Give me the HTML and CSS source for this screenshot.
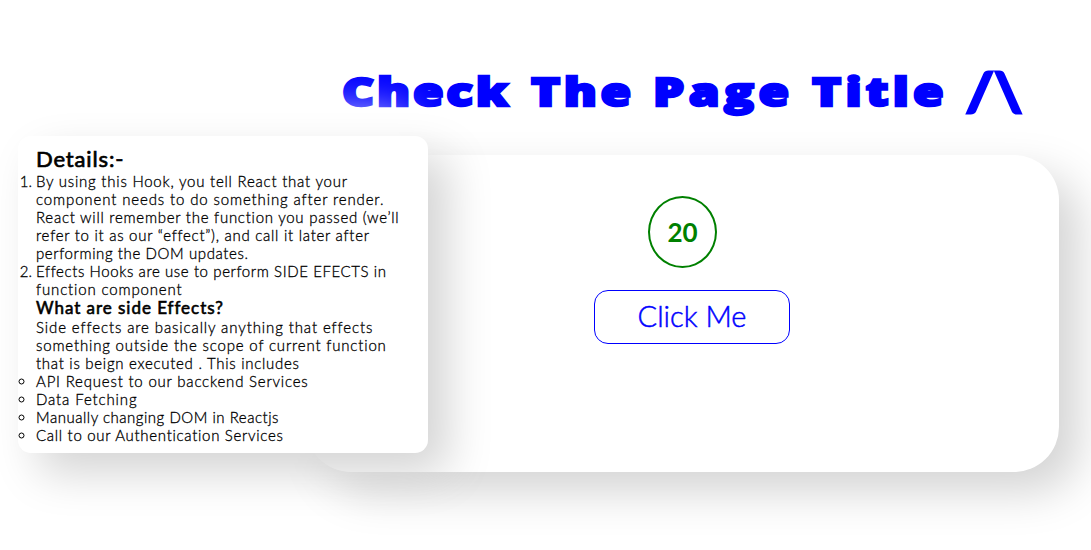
FILE: index.html
```
<!DOCTYPE html>
<html lang="en">
<head>
<meta charset="utf-8">
<title>Check The Page Title</title>
<link rel="stylesheet" href="styles.css">
</head>
<body>
<main class="page">
  <h1 class="heading"><span class="word check">Check</span><span class="word the">The</span><span class="word pg">Page</span><span class="word title">Title</span><span class="word arrow">/\</span></h1>
  <section class="card">
    <div class="count">20</div>
    <button class="button">Click Me</button>
  </section>
  <aside class="details">
    <h2 class="details-title">Details:-</h2>
    <ol class="list">
      <li><span class="line a1">By using this Hook, you tell React that your</span>
        <span class="line a2">component needs to do something after render.</span>
        <span class="line a3">React will remember the function you passed (we’ll</span>
        <span class="line a4">refer to it as our “effect”), and call it later after</span>
        <span class="line a5">performing the DOM updates.</span></li>
      <li><span class="line a6">Effects Hooks are use to perform SIDE EFECTS in</span>
        <span class="line a7">function component</span></li>
    </ol>
    <h3 class="subtitle">What are side Effects?</h3>
    <p class="text"><span class="line a8">Side effects are basically anything that effects</span>
      <span class="line a9">something outside the scope of current function</span>
      <span class="line a10">that is beign executed . This includes</span></p>
    <ul class="list circles">
      <li><span class="line a11">API Request to our bacckend Services</span></li>
      <li><span class="line a12">Data Fetching</span></li>
      <li><span class="line a13">Manually changing DOM in Reactjs</span></li>
      <li><span class="line a14">Call to our Authentication Services</span></li>
    </ul>
  </aside>
</main>
</body>
</html>
```
FILE: styles.css
```
* { box-sizing: border-box; margin: 0; padding: 0; }
body { background: #fff; font-family: Lato, "Liberation Sans", sans-serif; overflow: hidden; }
.page { position: relative; height: 550px; padding: 71px 32px 0 306px; }

.heading { display: flex; height: 84px; padding-left: 36px; color: #00f; font: 800 39px/40px "Open Sans", sans-serif; }
.word { flex: none; height: 40px; white-space: nowrap; transform: scaleX(1.27); transform-origin: left; -webkit-text-stroke: 2.3px #00f; }
.check { width: 189px; letter-spacing: 2.2px; }
.the { width: 122px; letter-spacing: 2.8px; }
.pg { width: 159px; letter-spacing: 3.5px; }
.title { width: 154px; letter-spacing: 3.3px; }
.arrow { font-family: Lato, sans-serif; font-size: 52px; line-height: 38px; font-weight: 700; transform: scaleX(1.13); letter-spacing: 1px; -webkit-text-stroke: 3px #00f; }

.card { display: flex; flex-direction: column; align-items: center; height: 317px; padding-top: 41px; border-radius: 45px; background: #fff; box-shadow: 20px 20px 45px #d4d4d4, -20px -20px 45px #fff; }
.count { width: 69px; height: 72px; border: 2px solid green; border-radius: 50%; color: green; font-size: 26px; font-weight: 700; line-height: 68px; text-align: center; }
.button { width: 196px; height: 54px; margin: 22px 0 0 19px; padding-bottom: 3px; border: 1px solid #00f; border-radius: 14px; background: transparent; color: #00f; font: 300 29px Lato, sans-serif; -webkit-text-stroke: .5px #00f; }

.details { position: absolute; left: 18px; top: 136px; width: 410px; height: 317px; padding: 10px 18px 9px; border-radius: 13px; background: #fff; box-shadow: 20px 20px 45px #d4d4d4, -20px -20px 45px #fff; font-size: 15px; font-weight: 300; line-height: 18px; color: #000; -webkit-text-stroke: .3px #000; }
.details-title { font-size: 22px; font-weight: 400; line-height: 26px; letter-spacing: .85px; -webkit-text-stroke: .7px #000; }
.subtitle { font-size: 17px; font-weight: 400; line-height: 20px; letter-spacing: .96px; -webkit-text-stroke: .6px #000; }
.circles { list-style: circle; }
.line { display: block; white-space: nowrap; }
.a1 { letter-spacing: .77px; }
.a2 { letter-spacing: .87px; }
.a3 { letter-spacing: .74px; }
.a4 { letter-spacing: .73px; }
.a5 { letter-spacing: .6px; }
.a6 { letter-spacing: .6px; }
.a7 { letter-spacing: .85px; }
.a8 { letter-spacing: .89px; }
.a9 { letter-spacing: .83px; }
.a10 { letter-spacing: .72px; }
.a11 { letter-spacing: .8px; }
.a12 { letter-spacing: .87px; }
.a13 { letter-spacing: .52px; }
.a14 { letter-spacing: .7px; }
```
